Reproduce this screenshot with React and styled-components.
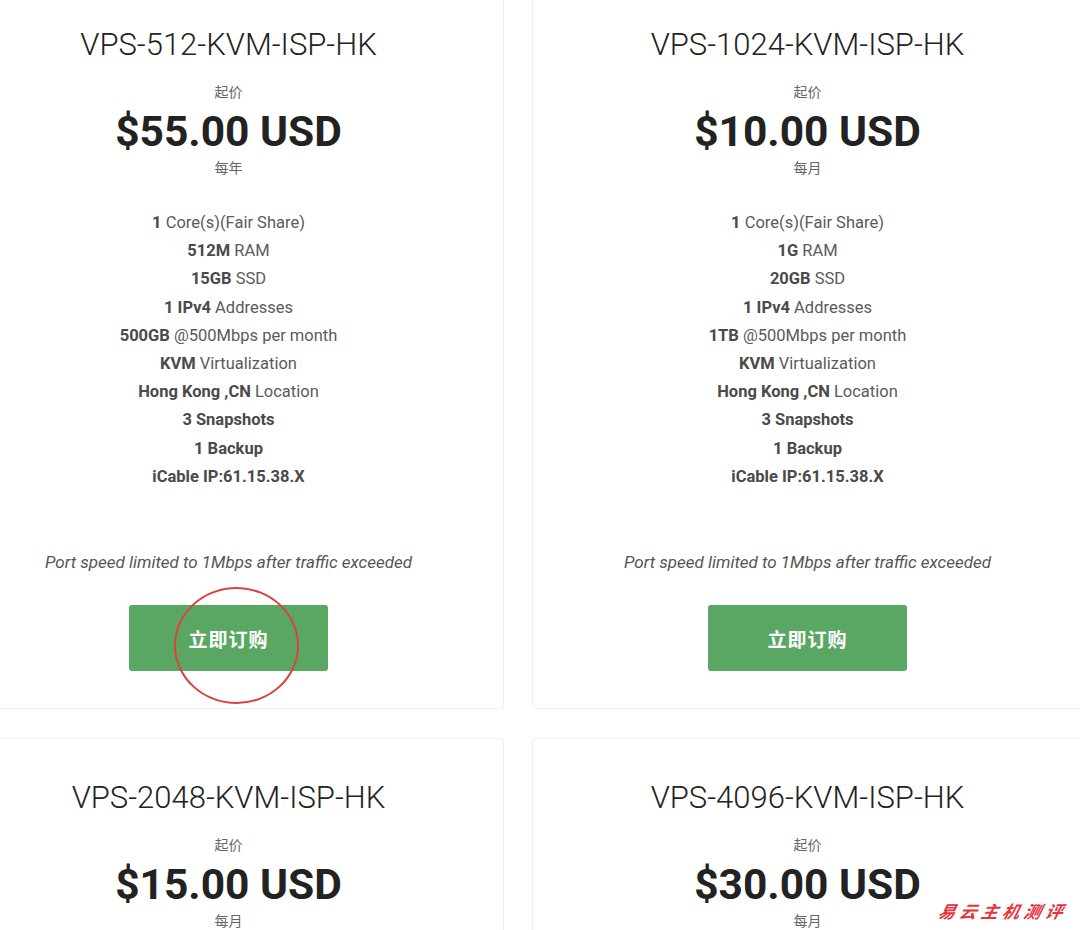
import React from 'react';
import styled, { createGlobalStyle } from 'styled-components';

const GlobalStyle = createGlobalStyle`
  html, body {
    margin: 0;
    padding: 0;
    background: #fff;
    overflow: hidden;
  }
  body {
    font-family: Roboto, "Noto Sans CJK SC", sans-serif;
    color: #555;
  }
`;

const Page = styled.div`
  position: relative;
  width: 1080px;
  height: 930px;
  overflow: hidden;
`;

const Grid = styled.div`
  display: grid;
  grid-template-columns: 551px 551px;
  gap: 29px 28px;
  margin: -15px 0 0 -47px;
`;

const Card = styled.div`
  display: flex;
  flex-direction: column;
  align-items: center;
  border: 1px solid #efefef;
  border-radius: 4px;
  padding: 39px 20px 37px;
  text-align: center;
`;

const Title = styled.h3`
  margin: 0;
  font-size: 31px;
  line-height: 40px;
  font-weight: 300;
  color: #222;
`;

const Caption = styled.div`
  font-size: 14px;
  line-height: 18px;
  color: #666;
  margin-top: ${({ $top }) => $top || 0}px;
`;

const Price = styled.div`
  margin-top: 4px;
  font-size: 42.5px;
  line-height: 54px;
  font-weight: 700;
  color: #222;
`;

const Features = styled.ul`
  list-style: none;
  margin: 32px 0 0;
  padding: 0;
  font-size: 16.5px;
  line-height: 28.2px;
  color: #5a5a5a;

  b {
    font-weight: 700;
    color: #4a4a4a;
  }
`;

const Note = styled.p`
  margin: 60px 0 0;
  font-size: 17px;
  line-height: 22px;
  font-style: italic;
  color: #555;
`;

const OrderButton = styled.a`
  display: flex;
  align-items: center;
  justify-content: center;
  width: 199px;
  height: 66px;
  margin-top: 32px;
  background: #5aa764;
  border-radius: 3px;
  color: #fff;
  font-size: 19px;
  font-weight: 700;
  letter-spacing: 1px;
  text-decoration: none;
  position: relative;
`;

const Circle = styled.span`
  position: absolute;
  left: 45px;
  top: -18px;
  width: 125px;
  height: 117px;
  border: 2px solid #d8443c;
  border-radius: 50%;
  box-sizing: border-box;
`;

const Watermark = styled.div`
  position: absolute;
  right: 13px;
  bottom: 7px;
  font-size: 17px;
  font-weight: 700;
  font-style: italic;
  letter-spacing: 4.4px;
  color: #e8333a;
  font-family: "Noto Sans CJK SC", sans-serif;
  transform: skewX(-14deg);
`;

const plans = [
  {
    name: 'VPS-512-KVM-ISP-HK',
    price: '$55.00 USD',
    cycle: '每年',
    ram: '512M',
    disk: '15GB',
    traffic: '500GB',
    marked: true,
  },
  {
    name: 'VPS-1024-KVM-ISP-HK',
    price: '$10.00 USD',
    cycle: '每月',
    ram: '1G',
    disk: '20GB',
    traffic: '1TB',
  },
  {
    name: 'VPS-2048-KVM-ISP-HK',
    price: '$15.00 USD',
    cycle: '每月',
    ram: '2G',
    disk: '30GB',
    traffic: '2TB',
  },
  {
    name: 'VPS-4096-KVM-ISP-HK',
    price: '$30.00 USD',
    cycle: '每月',
    ram: '4G',
    disk: '40GB',
    traffic: '3TB',
  },
];

function PlanCard({ plan }) {
  return (
    <Card>
      <Title>{plan.name}</Title>
      <Caption $top={18}>起价</Caption>
      <Price>{plan.price}</Price>
      <Caption>{plan.cycle}</Caption>
      <Features>
        <li><b>1</b> Core(s)(Fair Share)</li>
        <li><b>{plan.ram}</b> RAM</li>
        <li><b>{plan.disk}</b> SSD</li>
        <li><b>1 IPv4</b> Addresses</li>
        <li><b>{plan.traffic}</b> @500Mbps per month</li>
        <li><b>KVM</b> Virtualization</li>
        <li><b>Hong Kong ,CN</b> Location</li>
        <li><b>3 Snapshots</b></li>
        <li><b>1 Backup</b></li>
        <li><b>iCable IP:61.15.38.X</b></li>
      </Features>
      <Note>Port speed limited to 1Mbps after traffic exceeded</Note>
      <OrderButton href="#">
        立即订购
        {plan.marked && <Circle />}
      </OrderButton>
    </Card>
  );
}

export default function App() {
  return (
    <Page>
      <GlobalStyle />
      <Grid>
        {plans.map((p) => (
          <PlanCard key={p.name} plan={p} />
        ))}
      </Grid>
      <Watermark>易云主机测评</Watermark>
    </Page>
  );
}
